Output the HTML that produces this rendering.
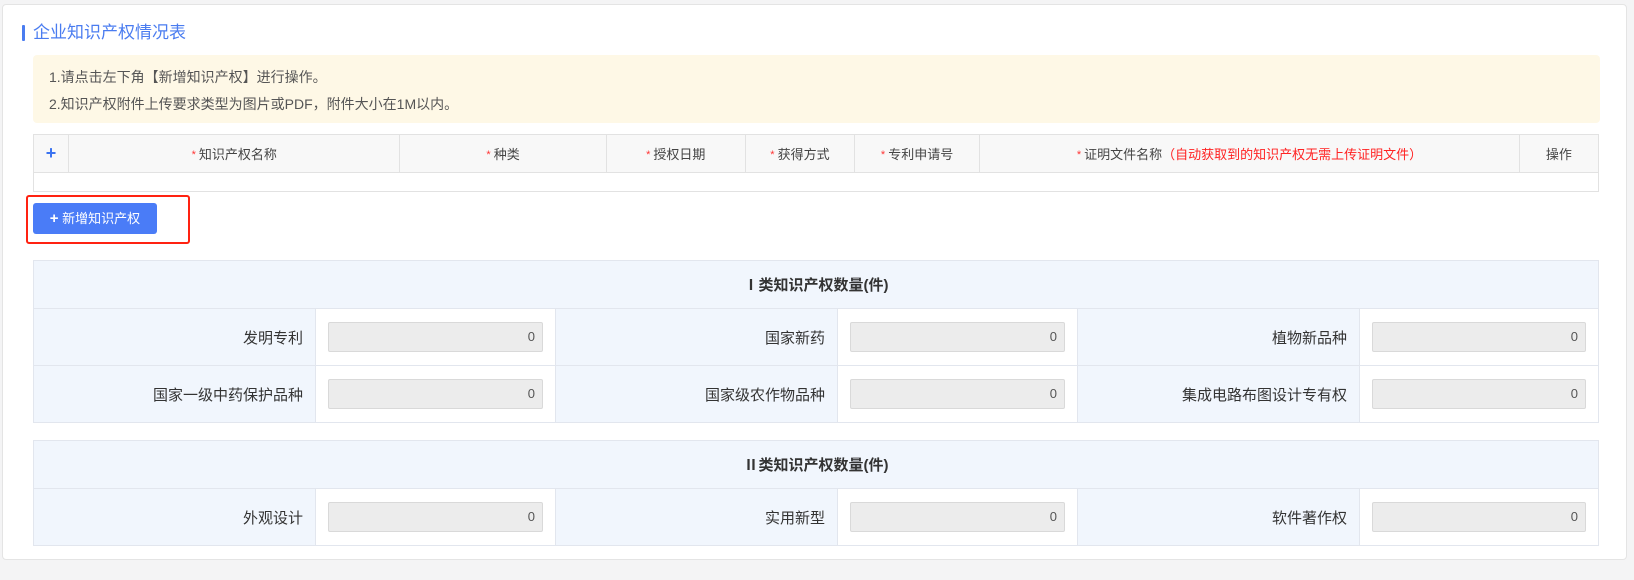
<!DOCTYPE html>
<html><head><meta charset="utf-8">
<style>
*{box-sizing:border-box;margin:0;padding:0}
body{width:1634px;height:580px;background:#f4f4f5;font-family:"Liberation Sans","Noto Sans CJK SC",sans-serif;color:#333;position:relative;overflow:hidden}
.card{position:absolute;left:2px;top:4px;width:1625px;height:556px;background:#fff;border:1px solid #e4e4e4;border-radius:4px}
.abs{position:absolute}
.title{left:19px;top:18px;font-size:17px;color:#4a7cf0;line-height:20px;padding-left:11px}
.title:before{content:"";position:absolute;left:0;top:2px;width:3px;height:16px;background:#4a7cf0;border-radius:1px}
.notice{left:30px;top:50px;width:1567px;height:68px;background:#fef8e6;border-radius:4px;font-size:14px;color:#555;padding:9px 0 0 16px;line-height:27px}
table{border-collapse:collapse;position:absolute}
.t0{left:30px;top:129px;width:1566px}
.t0 th{height:38px;background:#f8f8f8;border:1px solid #e2e2e2;font-weight:normal;font-size:13px;color:#444}
.t0 td{height:19px;border:1px solid #e2e2e2;border-top:none}
.st{color:#f33;font-size:11px;vertical-align:1px;margin-right:3px}
.red{color:#f22}
.rb{left:23px;top:190px;width:164px;height:49px;border:2px solid #f21;border-radius:3px}
.btn{left:30px;top:198px;width:124px;height:31px;background:#4a7cf7;border-radius:3px;color:#fff;font-size:13px;line-height:31px;text-align:center}
.t1 td,.t1 th{border:1px solid #e2e6ee}
.t1 th{background:#f1f6fd;height:48px;font-size:15px;font-weight:bold;color:#333}
.t1 td{height:57px}
.t1 td.l{background:#f1f6fd;text-align:right;padding-right:12px;font-size:15px;color:#333}
.t1 td.i{background:#fff;padding:0 12px}
.inp{height:30px;background:#ececec;border:1px solid #d9d9d9;border-radius:2px;text-align:right;padding-right:7px;line-height:28px;font-size:13px;color:#555}
</style></head><body>
<div class="card">
<div class="abs title">企业知识产权情况表</div>
<div class="abs notice">1.请点击左下角【新增知识产权】进行操作。<br>2.知识产权附件上传要求类型为图片或PDF，附件大小在1M以内。</div>
<table class="t0">
<tr><th style="width:35px;color:#3b73f0;font-size:18px;font-weight:bold">+</th><th style="width:331px"><span class="st">*</span>知识产权名称</th><th style="width:206px"><span class="st">*</span>种类</th><th style="width:139px"><span class="st">*</span>授权日期</th><th style="width:109px"><span class="st">*</span>获得方式</th><th style="width:125px"><span class="st">*</span>专利申请号</th><th style="width:539px"><span class="st">*</span>证明文件名称<span class="red">（自动获取到的知识产权无需上传证明文件）</span></th><th style="width:79px">操作</th></tr>
<tr><td colspan="8"></td></tr>
</table>
<div class="abs rb"></div>
<div class="abs btn"><b style="font-size:15px">+</b> 新增知识产权</div>
<table class="t1" style="left:30px;top:255px;width:1566px">
<tr><th colspan="6">Ⅰ类知识产权数量(件)</th></tr>
<tr><td class="l" style="width:282px">发明专利</td><td class="i" style="width:240px"><div class="inp">0</div></td><td class="l" style="width:282px">国家新药</td><td class="i" style="width:240px"><div class="inp">0</div></td><td class="l" style="width:282px">植物新品种</td><td class="i"><div class="inp">0</div></td></tr>
<tr><td class="l">国家一级中药保护品种</td><td class="i"><div class="inp">0</div></td><td class="l">国家级农作物品种</td><td class="i"><div class="inp">0</div></td><td class="l">集成电路布图设计专有权</td><td class="i"><div class="inp">0</div></td></tr>
</table>
<table class="t1" style="left:30px;top:435px;width:1566px">
<tr><th colspan="6">Ⅱ类知识产权数量(件)</th></tr>
<tr><td class="l" style="width:282px">外观设计</td><td class="i" style="width:240px"><div class="inp">0</div></td><td class="l" style="width:282px">实用新型</td><td class="i" style="width:240px"><div class="inp">0</div></td><td class="l" style="width:282px">软件著作权</td><td class="i"><div class="inp">0</div></td></tr>
</table>
</div>
</body></html>
